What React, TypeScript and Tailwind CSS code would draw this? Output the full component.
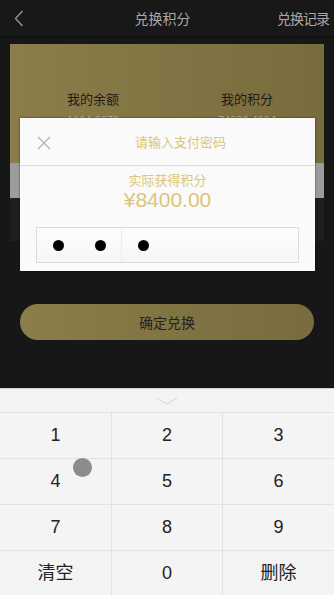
import React from 'react';

const font = { fontFamily: '"Noto Sans CJK SC", "Liberation Sans", sans-serif' };
const keys = ['1', '2', '3', '4', '5', '6', '7', '8', '9', '清空', '0', '删除'];

export default function App() {
  return (
    <div className="relative w-[334px] h-[595px] overflow-hidden bg-[#171717]" style={font}>
      {/* Top bar */}
      <div className="h-[38px] flex items-center justify-between px-3 bg-[#181818] border-b-2 border-[#111111]">
        <svg width="10" height="17" viewBox="0 0 10 17" className="ml-0.5">
          <path d="M8.5 1 L1.5 8.5 L8.5 16" fill="none" stroke="#9a9a9a" strokeWidth="1.3" />
        </svg>
        <div className="text-[14px] text-[#a8a8a8] ml-[24px]">兑换积分</div>
        <div className="text-[14px] text-[#a8a8a8] -mr-[7px] tracking-[-1px]">兑换记录</div>
      </div>

      {/* Balance card */}
      <div className="mx-[10px] mt-[6px]">
        <div className="h-[119px] bg-gradient-to-r from-[#8b7e4b] to-[#786b3d] flex pt-[45px]">
          <div className="flex-1 flex flex-col items-center pl-[6px]">
            <div className="text-[13px] text-[#1b1b1b]">我的余额</div>
            <div className="text-[11px] text-[#bdb188] mt-[2px]">1004.0070</div>
          </div>
          <div className="flex-1 flex flex-col items-center">
            <div className="text-[13px] text-[#1b1b1b]">我的积分</div>
            <div className="text-[11px] text-[#bdb188] mt-[2px]">74000.4994</div>
          </div>
        </div>
        <div className="h-[35px] bg-[#9c9c9c]" />
        <div className="h-[43px] bg-[#1f1f1f]" />
      </div>

      {/* Confirm button */}
      <div className="mx-[20px] mt-[63px] h-[36px] rounded-full bg-gradient-to-r from-[#8b7e4b] to-[#786b3d] flex items-center justify-center text-[14px] text-[#222222]">
        确定兑换
      </div>

      {/* Keyboard */}
      <div className="absolute left-0 right-0 top-[388px] bottom-0 bg-[#f4f4f4] border-t border-[#cfcfcf]">
        <div className="h-[23px] flex items-center justify-center">
          <svg width="22" height="8" viewBox="0 0 22 8">
            <path d="M1 1 L11 7 L21 1" fill="none" stroke="#dcdcdc" strokeWidth="1.2" />
          </svg>
        </div>
        <div className="grid grid-cols-[112px_111px_111px] border-t border-[#e2e2e2]">
          {keys.map((k, i) => (
            <div
              key={k}
              className={`h-[46px] flex items-center justify-center text-[18px] text-[#222222] border-b border-[#e2e2e2] ${
                i % 3 !== 2 ? 'border-r' : ''
              }`}
              style={{ fontFamily: '"Liberation Sans", "Noto Sans CJK SC", sans-serif' }}
            >
              {k}
            </div>
          ))}
        </div>
        <div className="absolute left-[73px] top-[69px] w-[19px] h-[19px] rounded-full bg-[#8c8c8c]" />
      </div>

      {/* Password dialog */}
      <div className="absolute left-[20px] top-[118px] w-[295px] h-[153px] bg-[#fafafa] shadow-[0_0_2px_rgba(0,0,0,0.6)]">
        <div className="h-[48px] flex items-center relative border-b border-[#d6e4df]">
          <svg width="14" height="14" viewBox="0 0 14 14" className="absolute left-[17px] top-[18px]">
            <path d="M1 1 L13 13 M13 1 L1 13" stroke="#b4b4b4" strokeWidth="1.3" />
          </svg>
          <div className="w-full text-center text-[13px] text-[#dcc577] pl-[26px]">请输入支付密码</div>
        </div>
        <div className="flex flex-col items-center pt-[6px]">
          <div className="text-[13px] leading-[16px] text-[#dcc577]">实际获得积分</div>
          <div className="text-[21px] leading-[24px] text-[#dcc577]" style={{ fontFamily: '"Liberation Sans", sans-serif' }}>
            ¥8400.00
          </div>
        </div>
        <div className="ml-[16px] mr-[16px] mt-[15px] h-[36px] border border-[#dcdcdc] bg-gradient-to-b from-[#fdfdfd] to-[#f6f6f6] grid grid-cols-6 pr-[6px]">
          {[0, 1, 2, 3, 4, 5].map((i) => (
            <div
              key={i}
              className={`flex items-center justify-center ${i === 1 ? 'border-r border-[#ececec]' : ''}`}
            >
              {i < 3 && <div className="w-[11px] h-[11px] rounded-full bg-black" />}
            </div>
          ))}
        </div>
      </div>
    </div>
  );
}
